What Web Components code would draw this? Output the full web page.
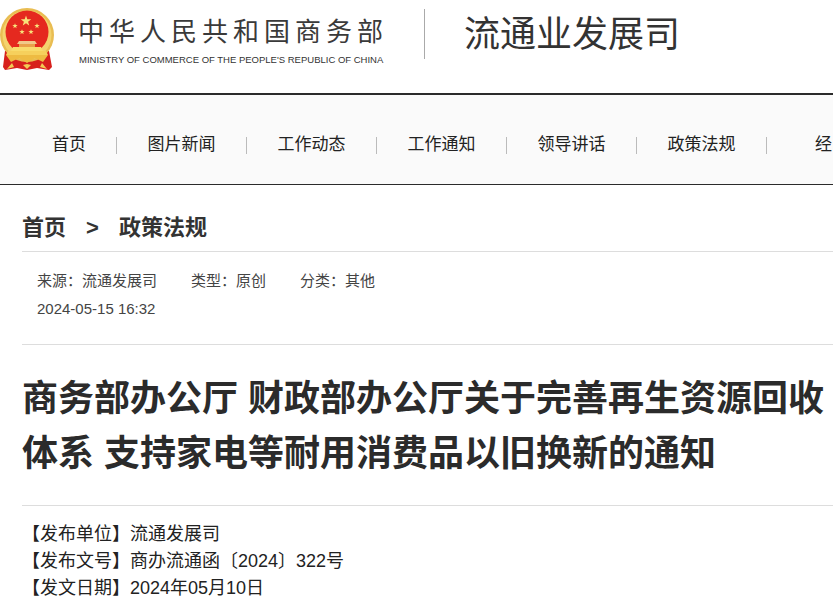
<!DOCTYPE html>
<html lang="zh-CN">
<head>
<meta charset="utf-8">
<title>流通业发展司</title>
<style>
  html, body { margin: 0; padding: 0; background: #fff; overflow: hidden; }
  body { font-family: "Liberation Sans", "Noto Sans CJK SC", sans-serif; width: 833px; height: 606px; }
</style>
</head>
<body>
<site-header></site-header>
<site-nav></site-nav>
<article-view>
  <span slot="crumb-home">首页</span>
  <span slot="crumb-current">政策法规</span>
</article-view>

<script>
const FONT = `"Liberation Sans", "Noto Sans CJK SC", sans-serif`;

class SiteHeader extends HTMLElement {
  constructor() {
    super();
    this.attachShadow({ mode: 'open' });
  }

  connectedCallback() {
    const star = (x, y, r) => {
      const pts = [];
      for (let i = 0; i < 10; i++) {
        const a = -Math.PI / 2 + i * Math.PI / 5;
        const d = i % 2 ? r * 0.4 : r;
        pts.push((x + d * Math.cos(a)).toFixed(1) + ',' + (y + d * Math.sin(a)).toFixed(1));
      }
      return `<polygon points="${pts.join(' ')}" fill="#f8e27a"/>`;
    };
    this.shadowRoot.innerHTML = `
      <style>
        :host {
          display: flex;
          align-items: flex-start;
          height: 93px;
          border-bottom: 2px solid #2b2b2b;
          font-family: ${FONT};
          white-space: nowrap;
          overflow: hidden;
        }
        svg { flex: none; margin: 7px 24px 0 -1px; }
        .ministry { flex: none; width: 345px; padding-top: 14px; color: #3a3a3a; }
        .cn { font-size: 26px; line-height: 36px; letter-spacing: 5px; margin-left: -1px; }
        .en { font-size: 9.5px; line-height: 14px; margin-top: 3px; color: #333; }
        .bar { flex: none; width: 1px; height: 50px; margin-top: 9px; background: #aaa; }
        .dept { margin: 10px 0 0 39px; font-size: 36px; line-height: 50px; color: #333; }
      </style>
      <svg width="56" height="64" viewBox="0 0 56 64" aria-hidden="true">
        <path d="M6 44 L4 60 L6 63 L18 61 L28 63 L38 61 L50 63 L53 60 L50 44 Z" fill="#d7201c"/>
        <circle cx="28" cy="28" r="27" fill="#e9bd52"/>
        <circle cx="28" cy="28" r="24.5" fill="#f4d36e"/>
        <circle cx="28" cy="25" r="21.5" fill="#e5291f"/>
        ${star(27, 14, 5.5)}${star(16, 19, 2.8)}${star(38, 19, 2.8)}${star(23, 25, 2.8)}${star(32, 25, 2.8)}
        <path d="M20 34 H36 L38 37 H18 Z" fill="#f1c98a"/>
        <rect x="20" y="37" width="16" height="3" fill="#e9a24a"/>
        <path d="M14 40 H42 L44 44 H12 Z" fill="#f9dc6c"/>
        <path d="M9 44 H47 L49 48 H7 Z" fill="#f6d05c"/>
        <path d="M7 48 H49 L44 55 L36 51 L28 56 L20 51 L12 55 Z" fill="#eebb42"/>
        <path d="M13 56 L8 62 L15 60 Z M43 56 L48 62 L41 60 Z M24 58 L28 62 L32 58 L28 57 Z" fill="#f3cb55"/>
      </svg>
      <div class="ministry">
        <div class="cn">中华人民共和国商务部</div>
        <div class="en">MINISTRY OF COMMERCE OF THE PEOPLE'S REPUBLIC OF CHINA</div>
      </div>
      <div class="bar"></div>
      <div class="dept">流通业发展司</div>
    `;
  }
}

class SiteNav extends HTMLElement {
  constructor() {
    super();
    this.attachShadow({ mode: 'open' });
    this.items = ['首页', '图片新闻', '工作动态', '工作通知', '领导讲话', '政策法规', '经'];
  }

  connectedCallback() {
    const links = this.items.map(t => `<a>${t}</a>`).join('');
    this.shadowRoot.innerHTML = `
      <style>
        :host {
          display: block;
          height: 89px;
          background: #fafafa;
          border-bottom: 1px solid #2b2b2b;
          font-family: ${FONT};
          overflow: hidden;
        }
        nav {
          display: flex;
          padding: 42px 0 0 22px;
        }
        a {
          flex: none;
          box-sizing: border-box;
          width: 130px;
          height: 17px;
          line-height: 15px;
          font-size: 17px;
          color: #222;
          text-align: center;
          border-right: 1px solid #bbb;
        }
        a:first-child { width: 95px; }
        a:last-child { width: 66px; padding-left: 48px; border-right: 0; text-align: left; }
      </style>
      <nav>${links}</nav>
    `;
  }
}

class ArticleView extends HTMLElement {
  constructor() {
    super();
    this.attachShadow({ mode: 'open' });
  }

  connectedCallback() {
    this.shadowRoot.innerHTML = `
      <style>
        :host {
          display: block;
          padding-left: 22px;
          font-family: ${FONT};
          color: #333;
        }
        .crumb {
          padding-top: 23px;
          height: 43px;
          font-size: 22px;
          line-height: 40px;
          font-weight: bold;
          border-bottom: 1px solid #ddd;
        }
        .crumb i { font-style: normal; margin: 0 20px; }
        .meta {
          padding: 15px 0 21px 15px;
          font-size: 15px;
          line-height: 28px;
          border-bottom: 1px solid #ddd;
          color: #444;
        }
        .meta span { margin-right: 34px; }
        h1 {
          margin: 0;
          padding: 26px 0 24px;
          font-size: 36px;
          line-height: 55px;
          font-weight: bold;
          white-space: nowrap;
          border-bottom: 1px solid #ddd;
          color: #2b2b2b;
        }
        .info {
          padding-top: 15px;
          font-size: 18px;
          line-height: 27px;
          color: #222;
        }
      </style>
      <div class="crumb"><slot name="crumb-home"></slot><i>&gt;</i><slot name="crumb-current"></slot></div>
      <div class="meta">
        <div><span>来源：流通发展司</span><span>类型：原创</span><span>分类：其他</span></div>
        <div>2024-05-15 16:32</div>
      </div>
      <h1>商务部办公厅 财政部办公厅关于完善再生资源回收<br>体系 支持家电等耐用消费品以旧换新的通知</h1>
      <div class="info">
        <div>【发布单位】流通发展司</div>
        <div>【发布文号】商办流通函〔2024〕322号</div>
        <div>【发文日期】2024年05月10日</div>
      </div>
    `;
  }
}

customElements.define('site-header', SiteHeader);
customElements.define('site-nav', SiteNav);
customElements.define('article-view', ArticleView);
</script>
</body>
</html>
